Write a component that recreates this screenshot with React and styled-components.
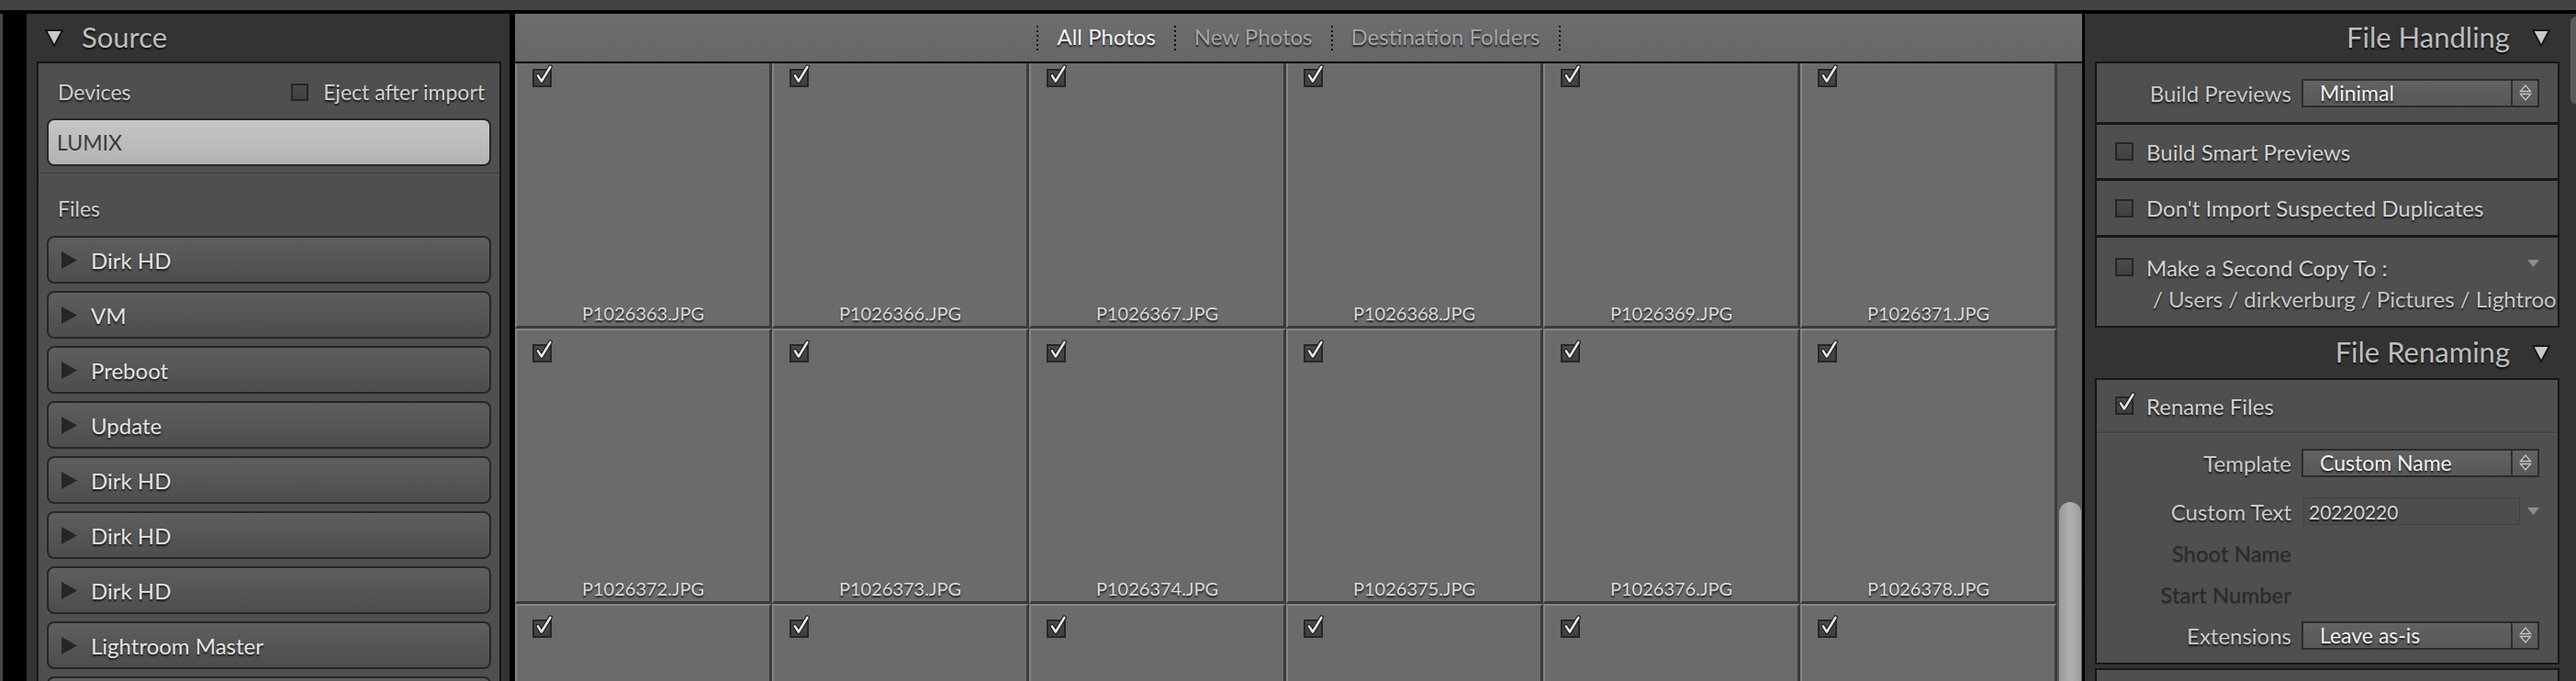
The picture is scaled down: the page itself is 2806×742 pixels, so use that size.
import React from "react";
import styled, { createGlobalStyle } from "styled-components";

const GlobalStyle = createGlobalStyle`
  html, body {
    margin: 0;
    padding: 0;
    background: #000;
  }
  body {
    font-family: Lato, "Open Sans", "Liberation Sans", sans-serif;
  }
  * {
    box-sizing: border-box;
  }
`;

const shadow = "0 2px 2px rgba(0, 0, 0, 0.75)";

const Frame = styled.div`
  width: 2806px;
  height: 742px;
  overflow: hidden;
  background: #000;
  display: flex;
  flex-direction: column;
`;

const TitleStrip = styled.div`
  flex: none;
  height: 15px;
  background: #434343;
  border-bottom: 4px solid #000;
`;

const Main = styled.div`
  flex: 1;
  display: flex;
  min-height: 0;
`;

const Gutter = styled.div`
  flex: none;
  width: 29px;
  border-left: 3px solid #474747;
  background: #000;
`;

const SidePanel = styled.div`
  flex: none;
  width: ${props => props.width}px;
  margin-left: ${props => props.gap || 0}px;
  background: #333;
  display: flex;
  overflow: hidden;
`;

const PanelColumn = styled.div`
  flex: 1;
  display: flex;
  flex-direction: column;
  min-width: 0;
`;

const PanelHeader = styled.div`
  flex: none;
  height: ${props => props.h || 52}px;
  display: flex;
  align-items: center;
  justify-content: ${props => (props.right ? "flex-end" : "flex-start")};
  padding: ${props => (props.right ? "0 21px 0 0" : "0 0 0 19px")};
  gap: ${props => (props.right ? 23 : 19)}px;
`;

const HeaderTitle = styled.span`
  font-size: 31px;
  color: #bebebe;
  text-shadow: ${shadow};
  line-height: 1;
  padding-bottom: 2px;
`;

const Box = styled.div`
  flex: none;
  width: 506px;
  margin-left: 11px;
  margin-top: ${props => props.mt || 0}px;
  border: 2px solid #161616;
  background: #4f4f4f;
  display: flex;
  flex-direction: column;
  ${props => (props.h ? `height: ${props.h}px;` : "")}
`;

const DeviceRow = styled.div`
  margin-top: 7px;
  height: 48px;
  padding: 0 16px 0 21px;
  display: flex;
  align-items: center;
  justify-content: space-between;
`;

const SectionLabel = styled.span`
  font-size: 23px;
  color: #cfcfcf;
  text-shadow: ${shadow};
`;

const CheckRow = styled.label`
  display: flex;
  align-items: center;
  gap: ${props => props.gap || 14}px;
  font-size: ${props => props.fs || 24}px;
  color: #d2d2d2;
  text-shadow: ${shadow};
  height: 32px;
  padding-left: ${props => props.pl || 0}px;
  padding-right: ${props => props.pr || 0}px;
  margin-top: ${props => props.mt || 0}px;
  white-space: nowrap;
`;

const DeviceButton = styled.div`
  margin: 5px 9px 0;
  height: 52px;
  border: 2px solid #262626;
  border-radius: 8px;
  background: linear-gradient(#c6c6c6, #b3b3b3);
  display: flex;
  align-items: center;
  padding-left: 9px;
  font-size: 23px;
  color: #3a3a3a;
`;

const Divider = styled.div`
  flex: none;
  margin-top: ${props => props.mt || 0}px;
  height: 3px;
  background: #444;
  border-bottom: 1px solid #5b5b5b;
`;

const FilesRow = styled.div`
  height: 66px;
  padding: 6px 0 0 21px;
  display: flex;
  align-items: center;
`;

const FolderList = styled.div`
  display: flex;
  flex-direction: column;
  gap: 8px;
  padding: 0 9px;
`;

const FolderButton = styled.div`
  flex: none;
  height: 52px;
  border: 2px solid #262626;
  border-radius: 8px;
  background: linear-gradient(#5e5e5e, #4d4d4d);
  display: flex;
  align-items: center;
  padding-left: 14px;
  gap: 15px;
  font-size: 24px;
  color: #e4e4e4;
  text-shadow: ${shadow};
`;

const Center = styled.div`
  flex: none;
  width: 1707px;
  margin-left: 6px;
  display: flex;
  flex-direction: column;
  background: #6a6a6a;
`;

const TopBar = styled.div`
  flex: none;
  height: 54px;
  border-bottom: 2px solid #000;
  background: linear-gradient(#6d6d6d, #676767);
  display: flex;
  align-items: center;
  justify-content: center;
`;

const Dots = styled.span`
  flex: none;
  width: 2px;
  height: 27px;
  background-image: linear-gradient(#0d0d0d 45%, transparent 45%);
  background-size: 2px 5px;
`;

const Tab = styled.span`
  padding: 0 20px;
  font-size: 24px;
  color: ${props => (props.active ? "#f2f2f2" : "#a6a6a6")};
  text-shadow: ${shadow};
  line-height: 1;
  padding-bottom: 2px;
`;

const GridArea = styled.div`
  flex: 1;
  display: flex;
  min-height: 0;
`;

const GridViewport = styled.div`
  width: 1680px;
  overflow: hidden;
`;

const Grid = styled.div`
  display: grid;
  grid-template-columns: repeat(6, 280px);
  grid-auto-rows: 300px;
  margin-top: -11px;
`;

const Cell = styled.div`
  display: flex;
  flex-direction: column;
  background: #6b6b6b;
  border-top: 2px solid #858585;
  border-left: 2px solid #858585;
  border-right: 3px solid #3a3a3a;
  border-bottom: 3px solid #3a3a3a;
  padding: 15px 0 2px 17px;
`;

const CellName = styled.div`
  margin-top: auto;
  margin-left: -17px;
  text-align: center;
  font-size: 20px;
  line-height: 24px;
  color: #dadada;
  text-shadow: ${shadow};
`;

const ScrollTrack = styled.div`
  width: 27px;
  background: #5a5a5a;
  padding: 478px 1px 0 2px;
  overflow: hidden;
`;

const ScrollThumb = styled.div`
  height: 300px;
  border-radius: 12px 12px 0 0;
  background: linear-gradient(90deg, #9a9a9a, #b0b0b0 50%, #9c9c9c);
`;

const EdgeScroll = styled.div`
  flex: none;
  width: 6px;
  padding-top: 3px;
`;

const EdgeThumb = styled.div`
  height: 95px;
  border-radius: 6px 0 0 6px;
  background: #5a5a5a;
`;

const Section = styled.div`
  flex: none;
  height: ${props => props.h}px;
  border-top: ${props => (props.first ? "none" : "3px solid #171717")};
  display: flex;
  flex-direction: column;
  justify-content: ${props => (props.top ? "flex-start" : "center")};
  padding-left: ${props => props.pl || 0}px;
`;

const FieldRow = styled.div`
  display: flex;
  align-items: center;
  gap: 11px;
  height: 32px;
  margin-top: ${props => props.mt || 0}px;
`;

const FieldLabel = styled.span`
  width: 212px;
  text-align: right;
  font-size: 24px;
  color: ${props => (props.disabled ? "#2a2a2a" : "#cbcbcb")};
  text-shadow: ${props =>
    props.disabled ? "0 1px 1px rgba(0, 0, 0, 0.25)" : shadow};
  white-space: nowrap;
`;

const SelectBox = styled.div`
  width: 259px;
  height: 31px;
  border: 2px solid #2a2a2a;
  background: linear-gradient(#626262, #585858);
  display: flex;
  align-items: stretch;
`;

const SelectValue = styled.span`
  flex: 1;
  padding-left: 18px;
  display: flex;
  align-items: center;
  font-size: 23px;
  color: #f0f0f0;
  text-shadow: ${shadow};
`;

const Stepper = styled.span`
  width: 29px;
  border-left: 2px solid #2e2e2e;
  display: flex;
  align-items: center;
  justify-content: center;
`;

const TextInput = styled.div`
  width: 236px;
  height: 30px;
  margin-left: 2px;
  border: 1px solid #414141;
  background: #4d4d4d;
  display: flex;
  align-items: center;
  padding-left: 5px;
  font-size: 21px;
  color: #d6d6d6;
  text-shadow: ${shadow};
`;

const PathText = styled.div`
  margin-top: 5px;
  padding-left: 61px;
  height: 28px;
  line-height: 28px;
  font-size: 24px;
  color: #c6c6c6;
  text-shadow: ${shadow};
  white-space: nowrap;
  overflow: hidden;
`;

const MenuArrow = styled.svg`
  flex: none;
  margin-left: ${props => props.ml || "auto"};
  align-self: ${props => props.align || "center"};
  margin-top: ${props => props.mt || 0}px;
`;

const FieldStack = styled.div`
  display: flex;
  flex-direction: column;
  gap: 13px;
  padding: 15px 0 14px;
`;

const CheckWrap = styled.span`
  position: relative;
  flex: none;
  width: 20px;
  height: 20px;
  border: 2px solid #252525;
  background: linear-gradient(#4a4a4a, #404040);
`;

const CheckMark = styled.svg`
  position: absolute;
  left: 0;
  top: -7px;
  pointer-events: none;
`;

const Tick = () => (
  <CheckMark width="21" height="23" viewBox="0 0 24 26">
    <path
      d="M4.5 14 L9 21 L20 3"
      fill="none"
      stroke="#1e1e1e"
      strokeWidth="5.5"
      strokeLinecap="round"
      strokeLinejoin="round"
    />
    <path
      d="M4.5 14 L9 21 L20 3"
      fill="none"
      stroke="#e8e8e8"
      strokeWidth="2.8"
      strokeLinecap="round"
      strokeLinejoin="round"
    />
  </CheckMark>
);

const Checkbox = ({ checked, size = 20 }) => (
  <CheckWrap style={{ width: size, height: size }}>
    {checked && <Tick />}
  </CheckWrap>
);

const Disclosure = () => (
  <svg width="22" height="22" viewBox="0 0 22 22">
    <polygon
      points="2,3 20,3 11,20"
      fill="#c9c9c9"
      stroke="#161616"
      strokeWidth="2"
      strokeLinejoin="round"
    />
  </svg>
);

const FolderArrow = () => (
  <svg width="17" height="19" viewBox="0 0 17 19">
    <polygon points="0,0 17,9.5 0,19" fill="#262626" />
  </svg>
);

const StepIcon = () => (
  <svg width="14" height="20" viewBox="0 0 14 20">
    <polygon points="7,2 12.5,8.5 1.5,8.5" fill="#555" stroke="#c4c4c4" strokeWidth="1.3" />
    <polygon points="1.5,11.5 12.5,11.5 7,18" fill="#555" stroke="#c4c4c4" strokeWidth="1.3" />
  </svg>
);

const SmallArrow = props => (
  <MenuArrow width="13" height="9" viewBox="0 0 13 9" {...props}>
    <polygon points="0,0 13,0 6.5,8" fill="#8e8e8e" />
  </MenuArrow>
);

const Select = ({ value }) => (
  <SelectBox>
    <SelectValue>{value}</SelectValue>
    <Stepper>
      <StepIcon />
    </Stepper>
  </SelectBox>
);

const GridCheck = styled.span`
  position: relative;
  display: block;
  width: 21px;
  height: 20px;
  border: 2px solid #262626;
  background: linear-gradient(#4a4a4a, #404040);
`;

const folders = [
  "Dirk HD",
  "VM",
  "Preboot",
  "Update",
  "Dirk HD",
  "Dirk HD",
  "Dirk HD",
  "Lightroom Master",
  "",
];

const photos = [
  "P1026363.JPG",
  "P1026366.JPG",
  "P1026367.JPG",
  "P1026368.JPG",
  "P1026369.JPG",
  "P1026371.JPG",
  "P1026372.JPG",
  "P1026373.JPG",
  "P1026374.JPG",
  "P1026375.JPG",
  "P1026376.JPG",
  "P1026378.JPG",
  "",
  "",
  "",
  "",
  "",
  "",
];

function SourcePanel() {
  return (
    <SidePanel width={526}>
      <PanelColumn>
        <PanelHeader>
          <Disclosure />
          <HeaderTitle>Source</HeaderTitle>
        </PanelHeader>
        <Box>
          <DeviceRow>
            <SectionLabel>Devices</SectionLabel>
            <CheckRow fs={23} gap={16}>
              <Checkbox size={19} />
              Eject after import
            </CheckRow>
          </DeviceRow>
          <DeviceButton>LUMIX</DeviceButton>
          <Divider mt={7} />
          <FilesRow>
            <SectionLabel>Files</SectionLabel>
          </FilesRow>
          <FolderList>
            {folders.map((name, i) => (
              <FolderButton key={i}>
                <FolderArrow />
                {name}
              </FolderButton>
            ))}
          </FolderList>
        </Box>
      </PanelColumn>
    </SidePanel>
  );
}

function PhotoGrid() {
  return (
    <Center>
      <TopBar>
        <Dots />
        <Tab active>All Photos</Tab>
        <Dots />
        <Tab>New Photos</Tab>
        <Dots />
        <Tab>Destination Folders</Tab>
        <Dots />
      </TopBar>
      <GridArea>
        <GridViewport>
          <Grid>
            {photos.map((name, i) => (
              <Cell key={i}>
                <GridCheck>
                  <Tick />
                </GridCheck>
                <CellName>{name}</CellName>
              </Cell>
            ))}
          </Grid>
        </GridViewport>
        <ScrollTrack>
          <ScrollThumb />
        </ScrollTrack>
      </GridArea>
    </Center>
  );
}

function SettingsPanel() {
  return (
    <SidePanel width={535} gap={3}>
      <PanelColumn>
        <PanelHeader right>
          <HeaderTitle>File Handling</HeaderTitle>
          <Disclosure />
        </PanelHeader>
        <Box>
          <Section first h={64}>
            <FieldRow>
              <FieldLabel>Build Previews</FieldLabel>
              <Select value="Minimal" />
            </FieldRow>
          </Section>
          <Section h={61} pl={20}>
            <CheckRow>
              <Checkbox />
              Build Smart Previews
            </CheckRow>
          </Section>
          <Section h={62} pl={20}>
            <CheckRow>
              <Checkbox />
              Don't Import Suspected Duplicates
            </CheckRow>
          </Section>
          <Section h={99} top>
            <CheckRow pl={20} pr={20} mt={16}>
              <Checkbox />
              Make a Second Copy To :
              <SmallArrow align="flex-start" mt={8} />
            </CheckRow>
            <PathText>/ Users / dirkverburg / Pictures / Lightroom</PathText>
          </Section>
        </Box>
        <PanelHeader right h={55}>
          <HeaderTitle>File Renaming</HeaderTitle>
          <Disclosure />
        </PanelHeader>
        <Box>
          <Section first h={56} pl={20}>
            <CheckRow>
              <Checkbox checked />
              Rename Files
            </CheckRow>
          </Section>
          <Divider />
          <FieldStack>
            <FieldRow>
              <FieldLabel>Template</FieldLabel>
              <Select value="Custom Name" />
            </FieldRow>
            <FieldRow mt={8}>
              <FieldLabel>Custom Text</FieldLabel>
              <TextInput>20220220</TextInput>
              <SmallArrow ml="-3px" />
            </FieldRow>
            <FieldRow>
              <FieldLabel disabled>Shoot Name</FieldLabel>
            </FieldRow>
            <FieldRow>
              <FieldLabel disabled>Start Number</FieldLabel>
            </FieldRow>
            <FieldRow>
              <FieldLabel>Extensions</FieldLabel>
              <Select value="Leave as-is" />
            </FieldRow>
          </FieldStack>
        </Box>
        <Box mt={4} h={60} />
      </PanelColumn>
      <EdgeScroll>
        <EdgeThumb />
      </EdgeScroll>
    </SidePanel>
  );
}

export default function App() {
  return (
    <Frame>
      <GlobalStyle />
      <TitleStrip />
      <Main>
        <Gutter />
        <SourcePanel />
        <PhotoGrid />
        <SettingsPanel />
      </Main>
    </Frame>
  );
}
